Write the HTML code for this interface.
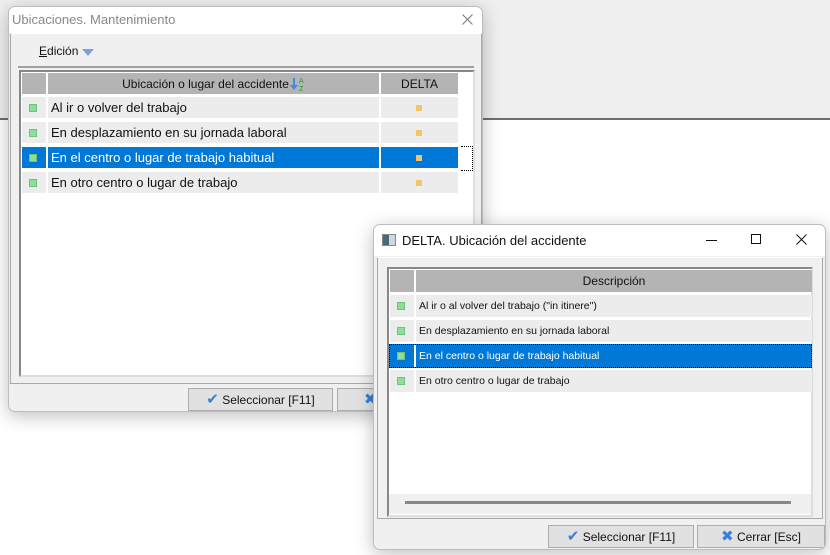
<!DOCTYPE html>
<html><head><meta charset="utf-8"><style>
*{margin:0;padding:0;box-sizing:border-box}
body{width:830px;height:555px;position:relative;overflow:hidden;background:#fff;font-family:"Liberation Sans",sans-serif;}
.abs{position:absolute}
.top{left:0;top:0;width:830px;height:120px;background:#efefef;border-bottom:2px solid #6e6e6e}
.win{background:#f0f0f0;border:1px solid #bdbdbd;border-radius:7px;box-shadow:0 4px 18px rgba(0,0,0,.25);overflow:hidden}
.tb{position:absolute;left:0;top:0;right:0;background:#fff}
.cell{position:absolute;background:#ececec;font-size:13px;color:#111;line-height:22px;white-space:nowrap}
.hd{position:absolute;background:#b4b4b4;font-size:12px;color:#111;text-align:center;line-height:22px;transform-origin:left}
.gr{position:absolute;width:8px;height:8px;background:#8fdc9b;border:1px solid #6cc47a}
.or{position:absolute;width:6px;height:6px;background:#f5c46a}
.btn{position:absolute;background:#e1e1e1;border:1px solid #adadad;font-size:12px;color:#111;text-align:center;line-height:21px}
.sel{background:#0078d7;color:#fff}
</style></head><body>
<div class="abs top"></div>

<!-- window 1 -->
<div class="abs win" style="left:8px;top:6px;width:475px;height:406px">
 <div class="tb" style="height:26px"><span class="abs" style="left:3px;top:5px;font-size:13px;color:#888">Ubicaciones. Mantenimiento</span>
 <svg class="abs" style="left:453px;top:7px" width="11" height="11"><path d="M0.5 0.5L10.5 10.5M10.5 0.5L0.5 10.5" stroke="#777" stroke-width="1"/></svg></div>
 <div class="abs" style="left:1px;top:26px;width:472px;height:351px;border:1px solid #a8a8a8;border-top-color:#fff"></div>
 <span class="abs" style="left:30px;top:37px;font-size:12px;color:#111"><u>E</u>dición</span>
 <svg class="abs" style="left:73px;top:42px" width="12" height="8"><path d="M0 0H12L6 7Z" fill="#7aa0e0"/></svg>
 <div class="abs" style="left:9px;top:59px;width:456px;height:2px;background:#a0a0a0"></div>
 <div class="abs" style="left:10px;top:63px;width:456px;height:307px;background:#fff;border:2px solid #888;border-right-color:#ddd;border-bottom-color:#ddd"></div>
 <div class="hd" style="left:13px;top:66px;width:24px;height:21px"></div>
 <div class="hd" style="left:39px;top:66px;width:331px;height:21px">Ubicación o lugar del accidente<svg width="16" height="16" style="vertical-align:-4px"><path d="M4 2V9H1L5 14L9 9H6V2Z" fill="#3a8ee6"/><text x="10" y="7" font-size="7" fill="#2a9a2a" font-family="Liberation Sans">A</text><text x="10" y="15" font-size="7" fill="#2a9a2a" font-family="Liberation Sans">Z</text></svg></div>
 <div class="hd" style="left:372px;top:66px;width:77px;height:21px">DELTA</div>

 <div class="cell" style="left:13px;top:90px;width:24px;height:21px"></div><div class="gr" style="left:20px;top:97px"></div>
 <div class="cell" style="left:39px;top:90px;width:331px;height:21px;padding-left:3px">Al ir o volver del trabajo</div>
 <div class="cell" style="left:372px;top:90px;width:77px;height:21px"></div><div class="or" style="left:407px;top:98px"></div>

 <div class="cell" style="left:13px;top:115px;width:24px;height:21px"></div><div class="gr" style="left:20px;top:122px"></div>
 <div class="cell" style="left:39px;top:115px;width:331px;height:21px;padding-left:3px">En desplazamiento en su jornada laboral</div>
 <div class="cell" style="left:372px;top:115px;width:77px;height:21px"></div><div class="or" style="left:407px;top:123px"></div>

 <div class="cell sel" style="left:13px;top:140px;width:24px;height:21px"></div><div class="gr" style="left:20px;top:147px"></div>
 <div class="cell sel" style="left:39px;top:140px;width:331px;height:21px;padding-left:3px">En el centro o lugar de trabajo habitual</div>
 <div class="cell sel" style="left:372px;top:140px;width:77px;height:21px"></div><div class="or" style="left:407px;top:148px"></div>
 <div class="abs" style="left:452px;top:139px;width:12px;height:25px;border:1px dotted #000;border-left:none"></div>

 <div class="cell" style="left:13px;top:165px;width:24px;height:21px"></div><div class="gr" style="left:20px;top:172px"></div>
 <div class="cell" style="left:39px;top:165px;width:331px;height:21px;padding-left:3px">En otro centro o lugar de trabajo</div>
 <div class="cell" style="left:372px;top:165px;width:77px;height:21px"></div><div class="or" style="left:407px;top:173px"></div>

 <div class="btn" style="left:179px;top:381px;width:145px;height:23px"><span style="color:#3a7fd8;font-size:15px">✔</span> Seleccionar [F11]</div>
 <div class="btn" style="left:328px;top:381px;width:145px;height:23px;text-align:left;padding-left:26px"><span style="color:#3a7fd8;font-size:15px">✖</span></div>
</div>

<!-- window 2 -->
<div class="abs win" style="left:373px;top:224px;width:453px;height:326px;background:#f0f0f0">
 <div class="tb" style="height:31px">
  <div class="abs" style="left:8px;top:9px;width:14px;height:12px;border:1px solid #888;background:linear-gradient(90deg,#4a6a7a 0 50%,#cfd8dc 50%)"></div>
  <span class="abs" style="left:28px;top:8px;font-size:13px;color:#111">DELTA. Ubicación del accidente</span>
  <div class="abs" style="left:332px;top:15px;width:11px;height:1px;background:#111"></div>
  <div class="abs" style="left:377px;top:9px;width:10px;height:10px;border:1px solid #111"></div>
  <svg class="abs" style="left:422px;top:9px" width="11" height="11"><path d="M0.5 0.5L10.5 10.5M10.5 0.5L0.5 10.5" stroke="#111" stroke-width="1"/></svg>
 </div>
 <div class="abs" style="left:3px;top:32px;width:446px;height:262px;border:1px solid #a8a8a8;border-top-color:#fff"></div>
 <div class="abs" style="left:13px;top:42px;width:426px;height:250px;background:#fff;border:2px solid #888;border-right-color:#ddd;border-bottom-color:#ddd"></div>
 <div class="hd" style="left:16px;top:45px;width:24px;height:22px"></div>
 <div class="hd" style="left:42px;top:45px;width:396px;height:22px">Descripción</div>

 <div class="cell" style="left:16px;top:70px;width:24px;height:22px"></div><div class="gr" style="left:23px;top:77px"></div>
 <div class="cell" style="left:42px;top:70px;width:396px;height:22px;padding-left:3px;font-size:10.5px">Al ir o al volver del trabajo ("in itinere")</div>
 <div class="cell" style="left:16px;top:95px;width:24px;height:22px"></div><div class="gr" style="left:23px;top:102px"></div>
 <div class="cell" style="left:42px;top:95px;width:396px;height:22px;padding-left:3px;font-size:10.5px">En desplazamiento en su jornada laboral</div>
 <div class="cell sel" style="left:15px;top:119px;width:423px;height:24px;border:1px dotted #000"></div>
 <div class="abs" style="left:40px;top:120px;width:2px;height:22px;background:#fff"></div><div class="gr" style="left:23px;top:127px"></div>
 <span class="abs" style="left:45px;top:120px;line-height:22px;font-size:10.5px;color:#fff">En el centro o lugar de trabajo habitual</span>
 <div class="cell" style="left:16px;top:145px;width:24px;height:22px"></div><div class="gr" style="left:23px;top:152px"></div>
 <div class="cell" style="left:42px;top:145px;width:396px;height:22px;padding-left:3px;font-size:10.5px">En otro centro o lugar de trabajo</div>

 <div class="abs" style="left:15px;top:269px;width:422px;height:20px;background:#f0f0f0"></div>
 <div class="abs" style="left:31px;top:276px;width:386px;height:3px;background:#888"></div>

 <div class="btn" style="left:174px;top:300px;width:146px;height:23px"><span style="color:#3a7fd8;font-size:15px">✔</span> Seleccionar [F11]</div>
 <div class="btn" style="left:323px;top:300px;width:128px;height:23px"><span style="color:#3a7fd8;font-size:15px">✖</span> Cerrar [Esc]</div>
</div>
</body></html>
